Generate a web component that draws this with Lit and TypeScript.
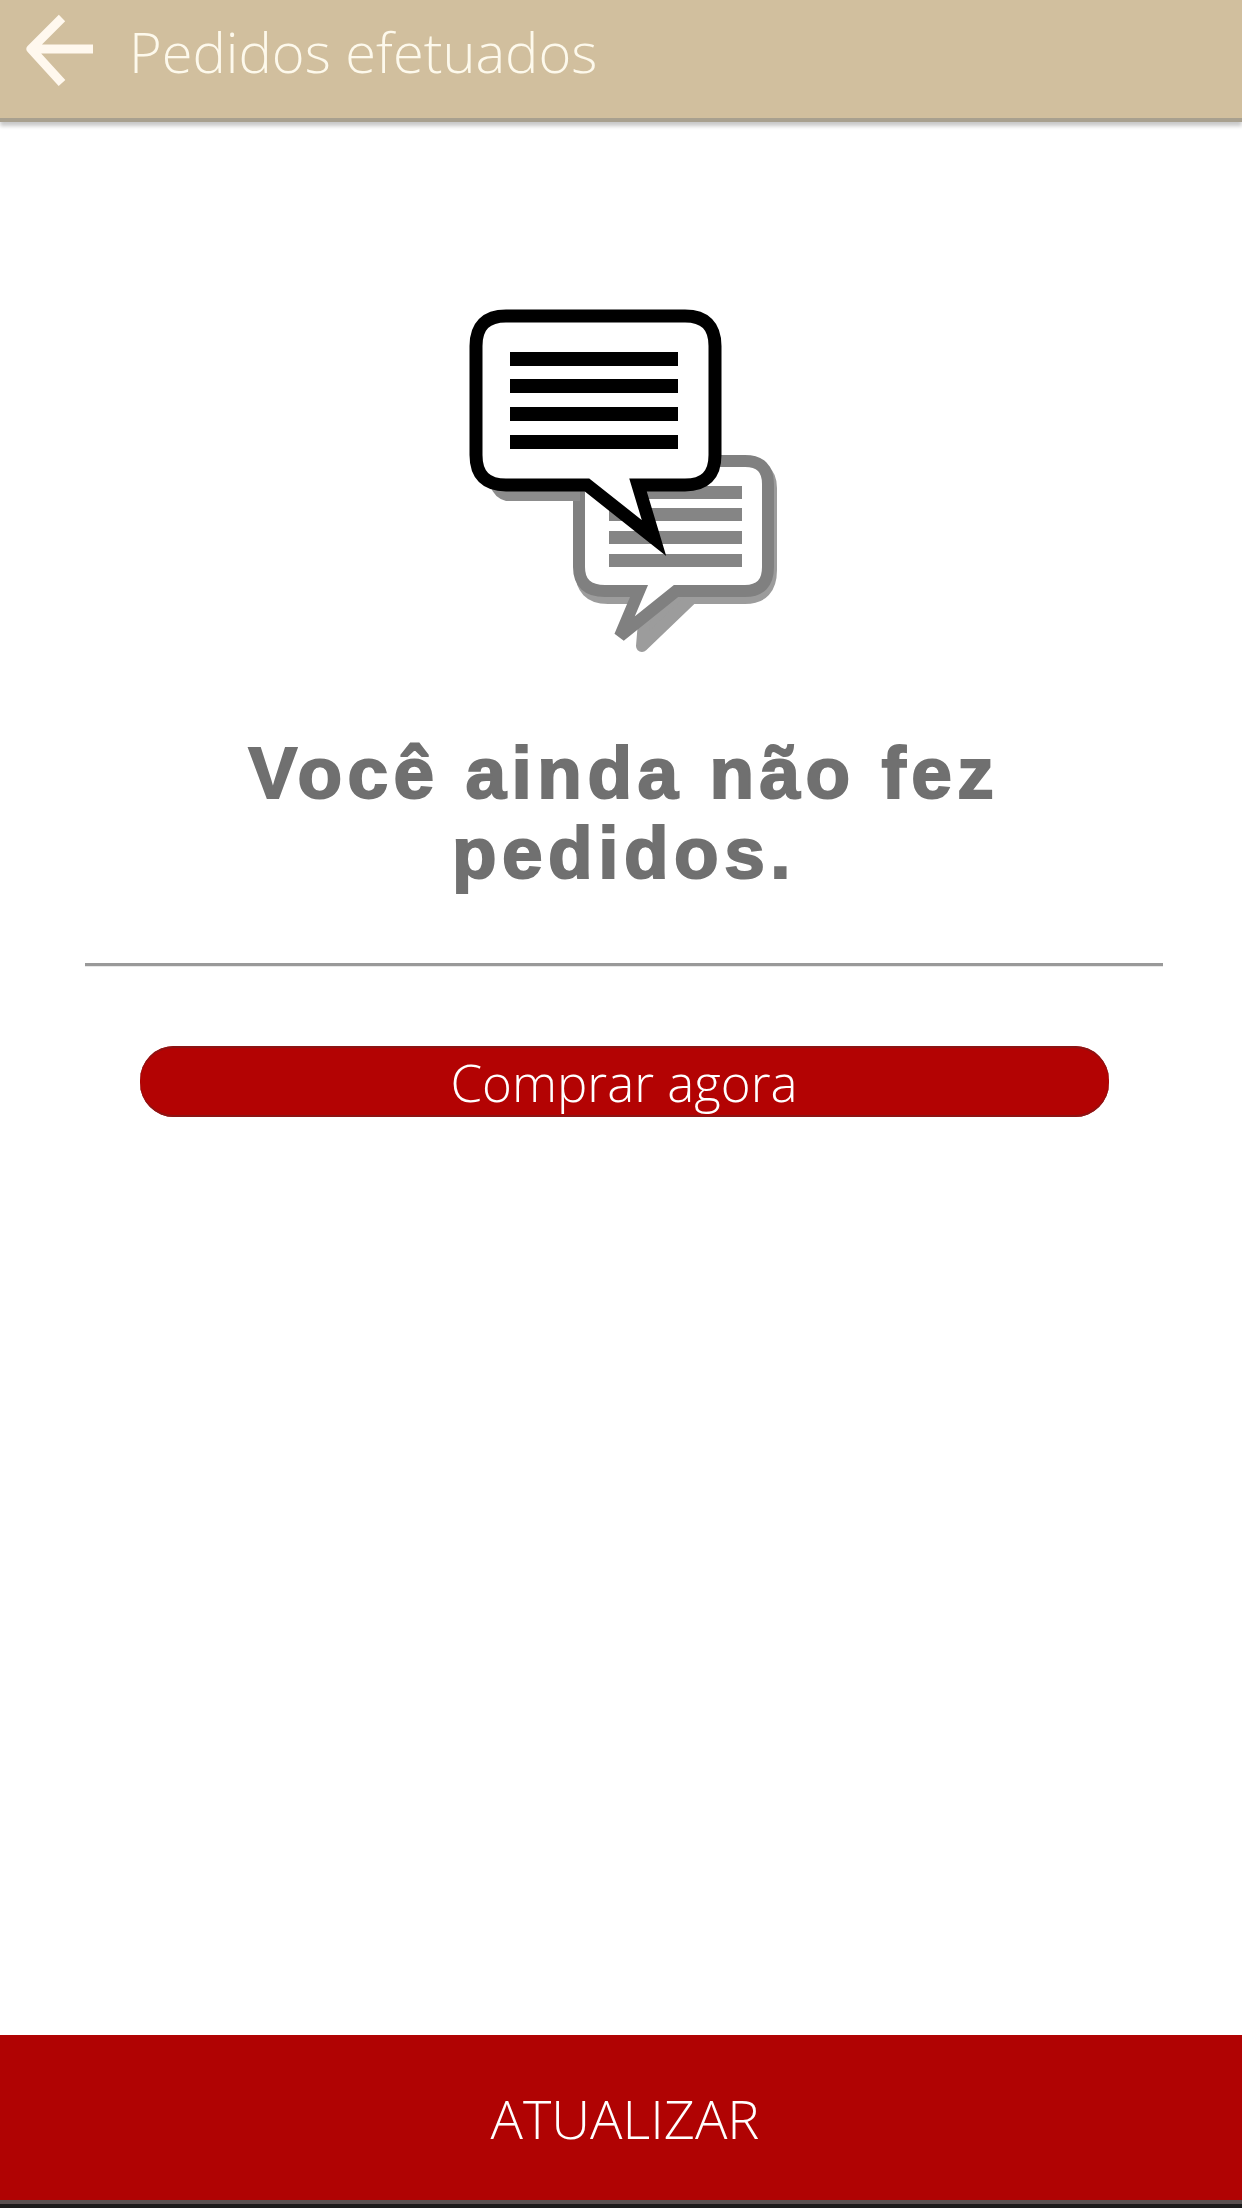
import { html, css, LitElement } from 'lit';
import { customElement } from 'lit/decorators.js';

@customElement('app-root')
export class AppRoot extends LitElement {
    static styles = css`
        :host {
            display: flex;
            flex-direction: column;
            height: 2208px;
            background: #fff;
            font-family: "Open Sans", sans-serif;
        }

        .header {
            flex: none;
            height: 118px;
            display: flex;
            align-items: center;
            gap: 34px;
            padding: 0 0 0 25px;
            background: #d1bf9e;
            box-shadow: 0 4px 0 #a8a08f, 0 8px 4px #c8c8c8;
            color: #fdf9ec;
        }

        .back {
            display: block;
            width: 70px;
            height: 76px;
            margin-top: -16px;
        }

        .title {
            margin-top: -16px;
            font-size: 56px;
            font-weight: 300;
            line-height: 70px;
        }

        .content {
            flex: 1;
            display: flex;
            flex-direction: column;
            align-items: center;
        }

        .bubbles {
            display: block;
            width: 360px;
            height: 380px;
            margin: 172px 2px 0 0;
        }

        .empty {
            margin: 63px 0 0 6px;
            width: 840px;
            text-align: center;
            font-family: "Liberation Sans", Arial, sans-serif;
            font-size: 73px;
            font-weight: 700;
            line-height: 80px;
            letter-spacing: 5.5px;
            color: #707070;
            -webkit-text-stroke: 2px #707070;
        }

        .divider {
            width: 1078px;
            height: 3px;
            margin: 70px 0 0 6px;
            background: #999;
            border-bottom: 1px solid #e8e8e8;
        }

        .buy {
            width: 969px;
            height: 71px;
            margin: 79px 0 0 6px;
            display: flex;
            align-items: center;
            justify-content: center;
            border-radius: 34px;
            background: #b30303;
            box-shadow: inset 0 2px 0 #8c1414, inset 0 -2px 0 #8c1414;
            color: #fff;
            font-size: 51px;
            font-weight: 300;
        }

        .footer {
            flex: none;
            height: 165px;
            padding-left: 8px;
            display: flex;
            align-items: center;
            justify-content: center;
            background: #b00303;
            color: #fff;
            font-size: 54px;
            font-weight: 300;
        }

        .navbar {
            flex: none;
            height: 8px;
            background: #1c1c1c;
            border-top: 4px solid #5a5050;
            box-sizing: border-box;
        }
    `;

    render() {
        return html`
            <div class="header">
                <svg class="back" viewBox="0 0 70 76" fill="none" stroke="#fff8ee" stroke-width="9" stroke-linejoin="round">
                    <path d="M68 36H8M37 5L6 36L37 70" />
                </svg>
                <div class="title">Pedidos efetuados</div>
            </div>
            <div class="content">
                <svg class="bubbles" viewBox="0 0 360 380">
                    <path fill="#9c9c9c" stroke="#9c9c9c" stroke-width="12" stroke-linejoin="round" d="M170 175H305Q331 175 331 198V280Q331 308 305 308H252L202 356L206 308H168Q141 308 141 280V198Q141 175 170 175Z" />
                    <path fill="#fff" stroke="#808080" stroke-width="12" stroke-linejoin="miter" d="M165 171H305Q328 171 328 194V277Q328 301 305 301H236L180 346L199 301H165Q139 301 139 277V194Q139 171 165 171Z" />
                    <g fill="#858585">
                        <rect x="169" y="196" width="133" height="13" />
                        <rect x="169" y="218" width="133" height="13" />
                        <rect x="169" y="241" width="133" height="13" />
                        <rect x="169" y="264" width="133" height="13" />
                    </g>
                    <path fill="#8c8c8c" d="M50 195H140V211H66Q54 208 50 195Z" />
                    <path fill="#fff" stroke="#000" stroke-width="13" stroke-linejoin="miter" d="M66 26H245Q275 26 275 56V165Q275 195 245 195H198L214 248L147 195H66Q36 195 36 165V56Q36 26 66 26Z" />
                    <g fill="#000">
                        <rect x="70" y="62" width="168" height="14" />
                        <rect x="70" y="89" width="168" height="14" />
                        <rect x="70" y="117" width="168" height="14" />
                        <rect x="70" y="145" width="168" height="14" />
                    </g>
                </svg>
                <h1 class="empty">Você ainda não fez pedidos.</h1>
                <div class="divider"></div>
                <div class="buy">Comprar agora</div>
            </div>
            <div class="footer">ATUALIZAR</div>
            <div class="navbar"></div>
        `;
    }
}

declare global {
    interface HTMLElementTagNameMap {
        'app-root': AppRoot;
    }
}
